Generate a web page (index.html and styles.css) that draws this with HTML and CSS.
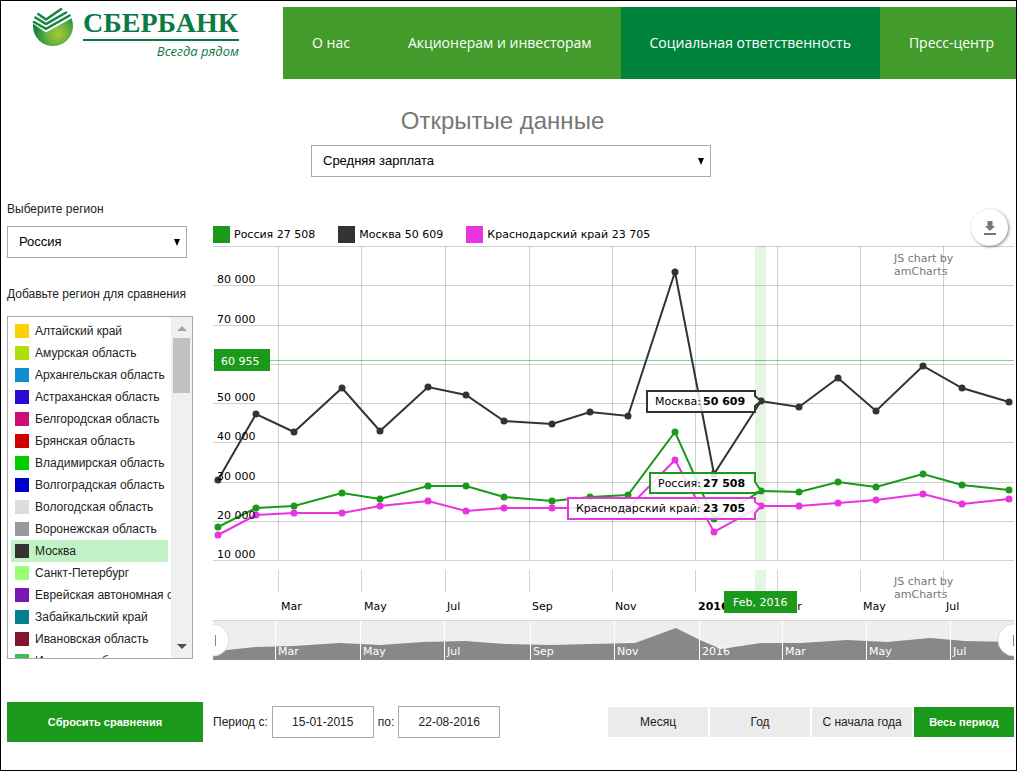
FILE: index.html
```html
<!DOCTYPE html>
<html lang="ru">
<head>
<meta charset="utf-8">
<title>Открытые данные</title>
<link rel="stylesheet" href="styles.css">
</head>
<body>
<div class="page">
  <header class="header">
    <a class="logo" href="#" aria-label="Сбербанк">
      <svg class="logo-mark" viewBox="0 0 42 42" width="42" height="42" aria-hidden="true">
        <defs>
          <radialGradient id="ball" cx="62%" cy="70%" r="64%">
            <stop offset="0" stop-color="#a5cc38"/>
            <stop offset=".4" stop-color="#6db33f"/>
            <stop offset=".85" stop-color="#1c8a40"/>
            <stop offset="1" stop-color="#0b7a43"/>
          </radialGradient>
        </defs>
        <circle cx="21" cy="19" r="20" fill="url(#ball)"/>
        <path d="M-1 -2H43V10L40 11L14 25.500L0 16Z" fill="#fff"/>
        <path d="M5.500 6.500L14 12.500L30 1.500M2.500 10L14 17L35 5M1 14.500L14 21.800L38.500 8" fill="none" stroke="#148542" stroke-width="2.500"/>
      </svg>
      <span class="logo-text">
        <span class="logo-name">СБЕРБАНК</span>
        <span class="logo-slogan">Всегда рядом</span>
      </span>
    </a>
    <nav class="nav">
      <a href="#">О нас</a>
      <a href="#">Акционерам и инвесторам</a>
      <a href="#" class="active">Социальная ответственность</a>
      <a href="#">Пресс-центр</a>
    </nav>
  </header>

  <section class="intro">
    <h1>Открытые данные</h1>
    <div class="select select-wide">
      <select aria-label="Показатель"><option>Средняя зарплата</option></select>
      <svg class="arrow" viewBox="0 0 6 7" aria-hidden="true"><path d="M0 0H6L3 7Z"/></svg>
    </div>
  </section>

  <main class="main">
    <aside class="side">
      <label class="side-label" for="region">Выберите регион</label>
      <div class="select select-region">
        <select id="region"><option>Россия</option></select>
        <svg class="arrow" viewBox="0 0 6 7" aria-hidden="true"><path d="M0 0H6L3 7Z"/></svg>
      </div>
      <p class="side-label side-label-add" id="compare">Добавьте регион для сравнения</p>
      <div class="regions">
        <div class="region-list" role="group" aria-labelledby="compare">
          <button type="button"><i class="c-altai"></i>Алтайский край</button>
          <button type="button"><i class="c-amur"></i>Амурская область</button>
          <button type="button"><i class="c-arkh"></i>Архангельская область</button>
          <button type="button"><i class="c-astr"></i>Астраханская область</button>
          <button type="button"><i class="c-belg"></i>Белгородская область</button>
          <button type="button"><i class="c-bryan"></i>Брянская область</button>
          <button type="button"><i class="c-vlad"></i>Владимирская область</button>
          <button type="button"><i class="c-volg"></i>Волгоградская область</button>
          <button type="button"><i class="c-volog"></i>Вологодская область</button>
          <button type="button"><i class="c-voron"></i>Воронежская область</button>
          <button type="button" class="selected" aria-pressed="true"><i class="c-moscow"></i>Москва</button>
          <button type="button"><i class="c-spb"></i>Санкт-Петербург</button>
          <button type="button"><i class="c-evr"></i>Еврейская автономная область</button>
          <button type="button"><i class="c-zab"></i>Забайкальский край</button>
          <button type="button"><i class="c-ivan"></i>Ивановская область</button>
          <button type="button"><i class="c-irk"></i>Иркутская область</button>
        </div>
        <div class="scrollbar" aria-hidden="true">
          <svg viewBox="0 0 10 5" width="10" height="5"><path d="M0 5L5 0L10 5Z" fill="#a3a3a3"/></svg>
          <span class="thumb"></span>
          <svg class="down" viewBox="0 0 10 5" width="10" height="5"><path d="M0 0L5 5L10 0Z" fill="#505050"/></svg>
        </div>
      </div>
    </aside>

    <section class="chart">
      <div class="chart-head">
        <ul class="legend">
          <li><i class="c-russia"></i>Россия 27 508</li>
          <li><i class="c-moscow"></i>Москва 50 609</li>
          <li><i class="c-krasnodar"></i>Краснодарский край 23 705</li>
        </ul>
        <button type="button" class="download" aria-label="Скачать">
          <svg viewBox="0 0 12 14" width="12" height="14" aria-hidden="true"><path d="M3.500 0H8.500V5H11L6 10L1 5H3.500ZM0 12H12V14H0Z" fill="#777"/></svg>
        </button>
      </div>
      <svg class="plot" viewBox="213 246 801 414" role="img" aria-label="Средняя зарплата по регионам">
        <g class="band"><path d="M755 246H766V560H755ZM755 570H766V591H755Z"/></g>
        <path class="grid" d="M213 246.500H1014M213 285.500H1014M213 325.500H1014M213 364.500H1014M213 403.500H1014M213 442.500H1014M213 482.500H1014M213 521.500H1014M213 560.500H1014"/>
        <path class="grid" d="M278.500 246V560M361.500 246V560M445.500 246V560M529.500 246V560M612.500 246V560M695.500 246V560M777.500 246V560M860.500 246V560M943.500 246V560M278.500 570V592M361.500 570V592M445.500 570V592M529.500 570V592M612.500 570V592M695.500 570V592M777.500 570V592M860.500 570V592M943.500 570V592"/>
        <path class="cursor" d="M213 360.500H1014"/>

        <defs>
          <marker id="dot-k" markerWidth="8" markerHeight="8" refX="4" refY="4" markerUnits="userSpaceOnUse"><circle cx="4" cy="4" r="3.500" fill="#e833e0"/></marker>
          <marker id="dot-r" markerWidth="8" markerHeight="8" refX="4" refY="4" markerUnits="userSpaceOnUse"><circle cx="4" cy="4" r="3.500" fill="#1a991a"/></marker>
          <marker id="dot-m" markerWidth="8" markerHeight="8" refX="4" refY="4" markerUnits="userSpaceOnUse"><circle cx="4" cy="4" r="3.500" fill="#333"/></marker>
        </defs>
        <polyline class="line krasnodar" points="218,535 256,515 294,513 342,513 380,506 428,501 466,511 504,508 552,508 590,508 628,508 675,460 714,532 761,506 799,506 838,503 876,500 923,494 962,504 1009,499"/>
        <polyline class="line russia" points="218,527 256,508 294,506 342,493 380,499 428,486 466,486 504,497 552,501 590,497 628,495 675,432 714,519 761,491 799,492 838,482 876,487 923,474 962,485 1009,490"/>
        <polyline class="line moscow" points="218,480 256,414 294,432 342,388 380,431 428,387 466,395 504,421 552,424 590,412 628,416 675,272 714,474 761,401 799,407 838,378 876,411 923,366 962,388 1009,402"/>

        <g class="label">
          <text x="217" y="283">80 000</text><text x="217" y="323">70 000</text>
          <text x="217" y="401">50 000</text><text x="217" y="440">40 000</text>
          <text x="217" y="480">30 000</text><text x="217" y="519">20 000</text>
          <text x="217" y="558">10 000</text>
          <text x="281" y="610">Mar</text><text x="364" y="610">May</text><text x="447" y="610">Jul</text>
          <text x="532" y="610">Sep</text><text x="615" y="610">Nov</text><text x="698" y="610" class="strong">2016</text>
          <text x="781" y="610">Mar</text><text x="863" y="610">May</text><text x="946" y="610">Jul</text>
        </g>
        <g class="credit">
          <text x="894" y="262">JS chart by</text><text x="894" y="275">amCharts</text>
          <text x="894" y="585">JS chart by</text><text x="894" y="598">amCharts</text>
        </g>

        <path class="tag" d="M214 349H270V371H214ZM724 591H797V613H724Z"/>
        <g class="label light"><text x="221" y="365">60 955</text><text x="733" y="606">Feb, 2016</text></g>

        <path class="balloon moscow" d="M647 391H755V396L761 401L755 406V412H647Z"/>
        <path class="balloon russia" d="M650 473H755V482L761 491L755 493V493H650Z"/>
        <path class="balloon krasnodar" d="M568 498H755V502L761 506L755 513V519H568Z"/>
        <g class="label">
          <text x="655" y="405">Москва:</text><text x="703" y="405" class="strong">50 609</text>
          <text x="658" y="487">Россия:</text><text x="703" y="487" class="strong">27 508</text>
          <text x="576" y="512">Краснодарский край:</text><text x="703" y="512" class="strong">23 705</text>
        </g>

        <path d="M213 620H1014V660H213Z" fill="#eee"/>
        <path class="scroll-top" d="M213 620.500H1014"/>
        <path d="M213 660V652L227 650L255 647L294 646L340 643L380 645L423 642L465 641L505 644L550 645L590 644L635 643L676 628L700 640L721 649L761 643L801 643L847 640L887 642L930 638L965 641L1014 642V660Z" fill="#888"/>
        <path class="scroll-grid" d="M275.500 621V660M360.500 621V660M444.500 621V660M530.500 621V660M614.500 621V660M699.500 621V660M782.500 621V660M866.500 621V660M950.500 621V660"/>
        <g class="label light">
          <text x="278" y="655">Mar</text><text x="363" y="655">May</text><text x="447" y="655">Jul</text>
          <text x="533" y="655">Sep</text><text x="617" y="655">Nov</text><text x="702" y="655">2016</text>
          <text x="785" y="655">Mar</text><text x="869" y="655">May</text><text x="953" y="655">Jul</text>
        </g>
        <g class="handle"><circle cx="213" cy="640" r="16"/><circle cx="1014" cy="640" r="16"/></g>
        <path d="M215.500 635V646M1013.500 635V646" stroke="#888"/>
      </svg>
    </section>
  </main>

  <footer class="controls">
    <button type="button" class="reset">Сбросить сравнения</button>
    <form class="period">
      <label for="from">Период с:</label><input id="from" type="text" value="15-01-2015">
      <label for="to">по:</label><input id="to" type="text" value="22-08-2016">
    </form>
    <div class="ranges">
      <button type="button">Месяц</button>
      <button type="button">Год</button>
      <button type="button">С начала года</button>
      <button type="button" class="current">Весь период</button>
    </div>
  </footer>
</div>
</body>
</html>
```
FILE: styles.css
```css
* { box-sizing: border-box; }
body { margin: 0; font: 12px/16px "Liberation Sans", Arial, sans-serif; color: #222; background: #fff; }
button, input, select { font: inherit; color: inherit; }
button { border: 0; padding: 0; cursor: pointer; }
h1, p, ul { margin: 0; padding: 0; }

.page { min-height: 100vh; border: 1px solid #000; padding-top: 6px; overflow: hidden; }

.header { display: flex; height: 72px; }
.logo { flex: 0 0 282px; display: flex; padding-left: 31px; text-decoration: none; color: #0b7a43; }
.logo-mark { flex: none; }
.logo-text { display: flex; flex-direction: column; width: 156px; margin-left: 9px; }
.logo-name { font: bold 28px/32px "Liberation Serif", "Times New Roman", serif; border-bottom: 2px solid #0b7a43; white-space: nowrap; }
.logo-slogan { font: italic 13px/20px "Open Sans", sans-serif; text-align: right; }
.nav { flex: 1; display: flex; min-width: 0; background: #429b2b; overflow: hidden; }
.nav a { flex: none; display: flex; align-items: center; padding: 0 29px; font: 14px/20px "Open Sans", sans-serif; color: #fff; text-decoration: none; }
.nav .active { background: #00843c; }

.intro { display: flex; flex-direction: column; align-items: center; padding-top: 26px; }
h1 { padding-right: 12px; font-size: 24px; line-height: 32px; font-weight: normal; color: #777; }

.select { position: relative; height: 32px; }
.select select { width: 100%; height: 100%; padding: 0 11px; border: 1px solid #a9a9a9; border-radius: 0; background: #fff; appearance: none; font-size: 13px; color: #000; }
.arrow { position: absolute; right: 7px; top: 13px; width: 6px; height: 7px; pointer-events: none; }
.select-wide { width: 400px; margin: 8px 0 0 5px; }
.select-region { width: 180px; margin-top: 9px; }

.main { display: flex; gap: 20px; padding: 24px 2px 0 6px; }
.side { flex: 0 0 186px; }
.side-label { display: block; white-space: nowrap; }
.side-label-add { margin: 28px 0 14px; }
.regions { display: flex; height: 343px; border: 1px solid #a9a9a9; overflow: hidden; }
.region-list { flex: 1; min-width: 0; padding: 3px 0 0 3px; overflow: hidden; }
.region-list button { display: flex; align-items: center; gap: 6px; width: 157px; height: 22px; padding-left: 4px; background: none; white-space: nowrap; }
.region-list .selected { background: #c0f2c5; }
.region-list i { flex: none; width: 14px; height: 14px; }
.scrollbar { flex: 0 0 21px; display: flex; flex-direction: column; align-items: center; padding: 9px 0; background: #f0f0f0; }
.thumb { width: 17px; height: 55px; margin-top: 7px; background: #c1c1c1; }
.down { margin-top: auto; }

.c-altai { background: #fcd202; }
.c-amur { background: #b0de09; }
.c-arkh { background: #0d8ecf; }
.c-astr { background: #2a0cd0; }
.c-belg { background: #cd0d74; }
.c-bryan { background: #c00; }
.c-vlad { background: #0c0; }
.c-volg { background: #00c; }
.c-volog { background: #ddd; }
.c-voron { background: #999; }
.c-moscow { background: #333; }
.c-spb { background: #9f7; }
.c-evr { background: #7717b4; }
.c-zab { background: #058090; }
.c-ivan { background: #851432; }
.c-irk { background: #38c050; }
.c-russia { background: #1a991a; }
.c-krasnodar { background: #e833e0; }

.chart { flex: 1; min-width: 0; }
.chart-head { display: flex; justify-content: space-between; align-items: center; height: 37px; margin: 8px 6px 0 0; }
.legend { display: flex; gap: 23px; padding-top: 13px; list-style: none; font: 11px/17px "DejaVu Sans", Verdana, sans-serif; white-space: nowrap; color: #000; }
.legend li { display: flex; gap: 4px; }
.legend i { width: 17px; height: 17px; }
.download { display: grid; place-items: center; width: 37px; height: 37px; border-radius: 50%; background: #fff; box-shadow: 1px 1px 3px #888; }
.plot { display: block; width: 100%; height: auto; }

.band { fill: #e6f4e4; }
.grid { fill: none; stroke: #000; stroke-opacity: .18; }
.cursor { stroke: #1a991a; stroke-opacity: .5; }
.line { fill: none; stroke-width: 2; }
.line.moscow { marker: url(#dot-m); }
.line.russia { marker: url(#dot-r); }
.line.krasnodar { marker: url(#dot-k); }
.moscow { stroke: #333; }
.russia { stroke: #1a991a; }
.krasnodar { stroke: #e833e0; }
.balloon { fill: #fff; fill-opacity: .85; stroke-width: 2; }
.label, .credit { font: 11px "DejaVu Sans", Verdana, sans-serif; fill: #000; }
.label.light { fill: #fff; }
.label .strong { font-weight: bold; }
.credit { fill: #777; }
.tag { fill: #1a991a; }
.scroll-top { stroke: #d5d5d5; }
.scroll-grid { stroke: #fff; }
.handle { fill: #fff; stroke: #ddd; }

.controls { display: flex; align-items: center; padding: 42px 2px 28px 6px; }
.reset { width: 196px; height: 40px; background: #1a991a; color: #fff; font-size: 11px; font-weight: bold; }
.period { display: flex; align-items: center; gap: 4px; margin-left: 10px; }
.period input { width: 102px; height: 32px; padding: 0; border: 1px solid #a9a9a9; text-align: center; }
.ranges { display: flex; gap: 2px; margin-left: auto; }
.ranges button { width: 100px; height: 30px; background: #ebebeb; }
.ranges .current { background: #1a991a; color: #fff; font-size: 11px; font-weight: bold; }
```
